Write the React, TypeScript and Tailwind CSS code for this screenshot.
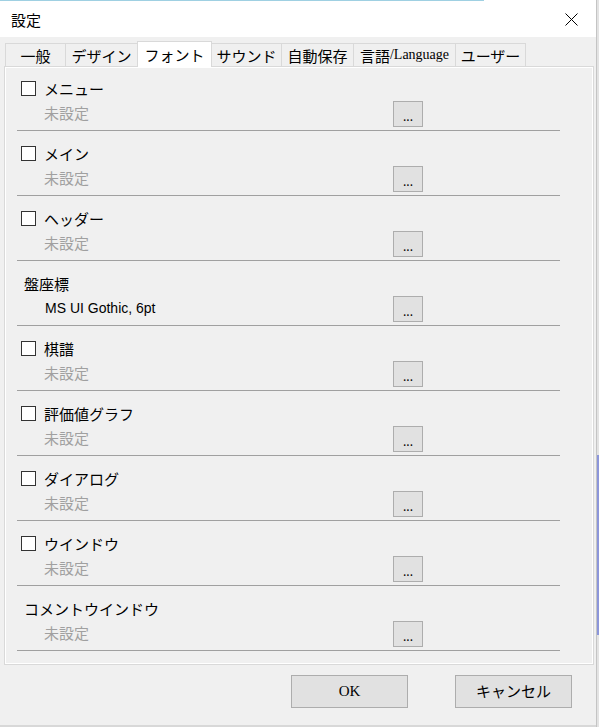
type Row = {
    label: string
    value: string
    checkbox: boolean
    set?: boolean
}

const rows: Row[] = [
    { label: 'メニュー', value: '未設定', checkbox: true },
    { label: 'メイン', value: '未設定', checkbox: true },
    { label: 'ヘッダー', value: '未設定', checkbox: true },
    { label: '盤座標', value: 'MS UI Gothic, 6pt', checkbox: false, set: true },
    { label: '棋譜', value: '未設定', checkbox: true },
    { label: '評価値グラフ', value: '未設定', checkbox: true },
    { label: 'ダイアログ', value: '未設定', checkbox: true },
    { label: 'ウインドウ', value: '未設定', checkbox: true },
    { label: 'コメントウインドウ', value: '未設定', checkbox: false },
]

const tabs = [
    { label: '一般', w: 'w-[61px]' },
    { label: 'デザイン', w: 'w-[73px]' },
    { label: 'フォント', w: 'w-[75px]', active: true },
    { label: 'サウンド', w: 'w-[71px]' },
    { label: '自動保存', w: 'w-[73px]' },
    { label: '言語', w: 'w-[103px]', latin: '/Language' },
    { label: 'ユーザー', w: 'w-[71px]' },
]

function FontRow({ row }: { row: Row }) {
    return (
        <div className="h-[65px] ml-[12px] w-[543px] border-b border-[#a0a0a0] flex flex-col">
            <div className="mt-[15px] h-[15px] flex items-center">
                {row.checkbox ? (
                    <>
                        <div className="ml-[4px] w-[15px] h-[15px] bg-white border border-[#333333]" />
                        <span className="ml-[8px] leading-none">{row.label}</span>
                    </>
                ) : (
                    <span className="ml-[7px] leading-none">{row.label}</span>
                )}
            </div>
            <div className="mt-[5px] flex items-center">
                {row.set ? (
                    <span
                        className="ml-[28px] w-[348px] leading-none text-black text-[14px] pb-[2px]"
                        style={{ fontFamily: '"Liberation Sans", sans-serif' }}
                    >
                        {row.value}
                    </span>
                ) : (
                    <span className="ml-[27px] w-[349px] leading-none text-[#a0a0a0] pb-[3px]">{row.value}</span>
                )}
                <div className="w-[30px] h-[26px] bg-[#e1e1e1] border border-[#adadad] flex items-center justify-center text-[12px] leading-none pt-[4px]">
                    ...
                </div>
            </div>
        </div>
    )
}

export default function App() {
    return (
        <div
            className="w-[599px] h-[727px] flex bg-[#d8d8d8] text-[15px] text-black overflow-hidden"
            style={{ fontFamily: '"Noto Sans CJK JP", "Noto Sans", sans-serif' }}
        >
            <div className="w-[596px] h-[725px] flex flex-col bg-[#f0f0f0]">
                {/* title bar */}
                <div className="h-[37px] bg-white flex flex-col">
                    <div className="h-[1px] w-[484px] bg-[#9fd0e2]" />
                    <div className="flex-1 flex items-center justify-between pl-[11px] pr-[18px]">
                        <span className="text-[15px] leading-none">設定</span>
                        <svg width="13" height="13" viewBox="0 0 13 13" className="mt-[1px]">
                            <path d="M0.5 0.5 L12.5 12.5 M12.5 0.5 L0.5 12.5" stroke="#000" strokeWidth="1" fill="none" />
                        </svg>
                    </div>
                </div>

                {/* tabs */}
                <div className="mt-[4px] ml-[5px] h-[25px] flex items-end">
                    {tabs.map((t) =>
                        t.active ? (
                            <div
                                key={t.label}
                                className={`${t.w} h-[26px] -mb-[1px] -ml-[1px] bg-white border border-b-0 border-[#d9d9d9] flex items-center justify-center leading-none relative z-10`}
                            >
                                {t.label}
                            </div>
                        ) : (
                            <div
                                key={t.label}
                                className={`${t.w} h-[23px] bg-[#f0f0f0] border border-b-0 border-[#d9d9d9] flex items-center justify-center leading-none -ml-[1px] first:ml-0`}
                            >
                                {t.label}
                                {t.latin && (
                                    <span style={{ fontFamily: '"Liberation Serif", serif' }} className="text-[14px]">
                                        {t.latin}
                                    </span>
                                )}
                            </div>
                        ),
                    )}
                </div>

                {/* panel */}
                <div className="ml-[4px] w-[590px] h-[599px] border border-[#d9d9d9] shadow-[inset_1px_1px_0_#ffffff,inset_-1px_-1px_0_#ffffff] bg-[#f0f0f0]">
                    <div className="-mt-px">
                        {rows.map((r) => (
                            <FontRow key={r.label} row={r} />
                        ))}
                    </div>
                </div>

                {/* buttons */}
                <div className="mt-[10px] flex">
                    <div
                        className="ml-[291px] w-[117px] h-[33px] bg-[#e1e1e1] border border-[#adadad] flex items-center justify-center text-[15px]"
                        style={{ fontFamily: '"Liberation Serif", serif' }}
                    >
                        OK
                    </div>
                    <div className="ml-[47px] w-[117px] h-[33px] bg-[#e1e1e1] border border-[#adadad] flex items-center justify-center text-[15px]">
                        キャンセル
                    </div>
                </div>
            </div>
            <div className="w-[3px] h-[727px] flex flex-col border-l border-[#c4c4c4]">
                <div className="h-[455px] bg-[#e3e3e3]" />
                <div className="h-[180px] bg-[#8c96da]" />
                <div className="flex-1 bg-[#e3e3e3]" />
            </div>
        </div>
    )
}
